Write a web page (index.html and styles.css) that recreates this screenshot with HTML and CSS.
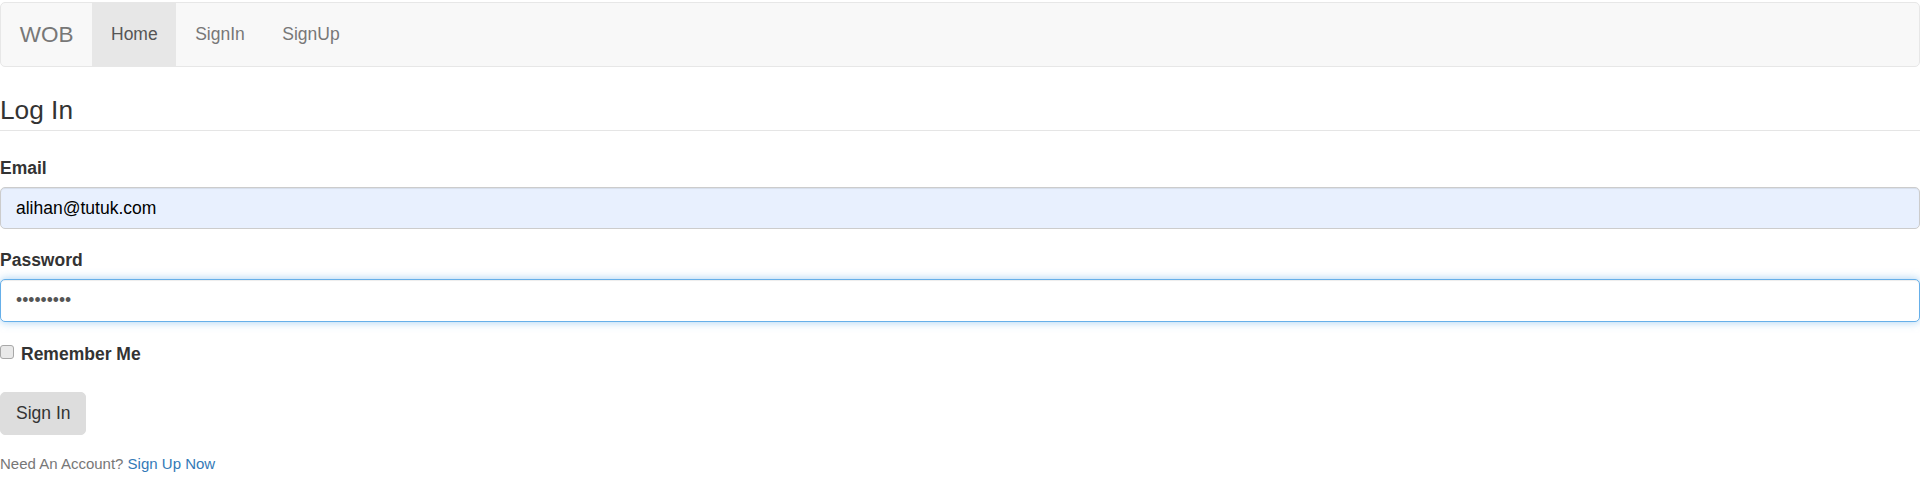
FILE: index.html
```html
<!DOCTYPE html>
<html>
<head>
<meta charset="utf-8">
<title>WOB - Log In</title>
<link rel="stylesheet" href="styles.css">
</head>
<body>
<nav class="navbar">
  <a class="brand" href="#">WOB</a>
  <ul class="nav">
    <li class="nav-item active"><a href="#">Home</a></li>
    <li class="nav-item"><a href="#">SignIn</a></li>
    <li class="nav-item"><a href="#">SignUp</a></li>
  </ul>
</nav>
<form class="login">
  <div class="legend">Log In</div>
  <div class="form-group">
    <label class="label" for="email">Email</label>
    <input class="control autofill" id="email" type="email" value="alihan@tutuk.com">
  </div>
  <div class="form-group">
    <label class="label" for="password">Password</label>
    <input class="control focus" id="password" type="password" value="123456789">
  </div>
  <div class="remember">
    <input class="check" id="remember" type="checkbox">
    <label class="label" for="remember">Remember Me</label>
  </div>
  <button class="btn" type="button">Sign In</button>
  <p class="foot"><small>Need An Account? <a class="link" href="#">Sign Up Now</a></small></p>
</form>
</body>
</html>
```

FILE: styles.css
```css
* { box-sizing: border-box; }
html, body { margin: 0; padding: 0; background: #fff; }
body {
  font-family: "Liberation Sans", Arial, Helvetica, sans-serif;
  font-size: 17.5px;
  line-height: 25px;
  color: #333;
}
.navbar {
  margin-top: 2px;
  height: 65px;
  border: 1px solid #e7e7e7;
  border-radius: 5px;
  background: #f8f8f8;
  display: flex;
  align-items: stretch;
}
.brand {
  display: block;
  padding: 0 18.75px;
  font-size: 22.5px;
  line-height: 63px;
  color: #777;
  text-decoration: none;
}
.nav {
  list-style: none;
  margin: 0;
  padding: 0;
  display: flex;
}
.nav-item a {
  display: block;
  padding: 0 18.75px;
  line-height: 63px;
  color: #777;
  text-decoration: none;
}
.nav-item.active a {
  background: #e7e7e7;
  color: #555;
}
.login {
  margin-top: 25px;
}
.legend {
  font-size: 26.25px;
  line-height: 37.5px;
  color: #333;
  border-bottom: 1px solid #e5e5e5;
  margin-bottom: 25px;
}
.form-group {
  margin-bottom: 18.75px;
}
.label {
  display: inline-block;
  font-weight: bold;
  margin-bottom: 6.25px;
}
.control {
  display: block;
  width: 100%;
  height: 42.5px;
  padding: 7.5px 15px;
  font-family: inherit;
  font-size: 17.5px;
  line-height: 25px;
  color: #555;
  background: #fff;
  border: 1px solid #ccc;
  border-radius: 5px;
  box-shadow: inset 0 1px 1px rgba(0,0,0,.075);
  outline: none;
}
.control.autofill {
  background: #e8f0fe;
  color: #000;
}
.control.focus {
  border-color: #66afe9;
  box-shadow: inset 0 1px 1px rgba(0,0,0,.075), 0 0 10px rgba(102,175,233,.6);
}
.remember {
  display: flex;
  align-items: flex-start;
  gap: 7px;
  height: 33px;
  margin-top: 20.5px;
  margin-bottom: 17px;
}
.remember .label { margin: 0; }
.check {
  -webkit-appearance: none;
  appearance: none;
  margin: 3px 0 0;
  width: 14px;
  height: 14px;
  border: 1px solid #a8a8a8;
  border-radius: 3px;
  background: #e9e9e9;
}
.btn {
  display: block;
  height: 42.5px;
  padding: 7.5px 15px;
  font-family: inherit;
  font-size: 17.5px;
  line-height: 25px;
  color: #333;
  background: #ddd;
  border: 1px solid #ddd;
  border-radius: 5px;
}
.foot {
  margin: 16px 0 0;
}
.foot small {
  font-size: 15px;
  color: #777;
}
.link {
  color: #337ab7;
  text-decoration: none;
}
```
